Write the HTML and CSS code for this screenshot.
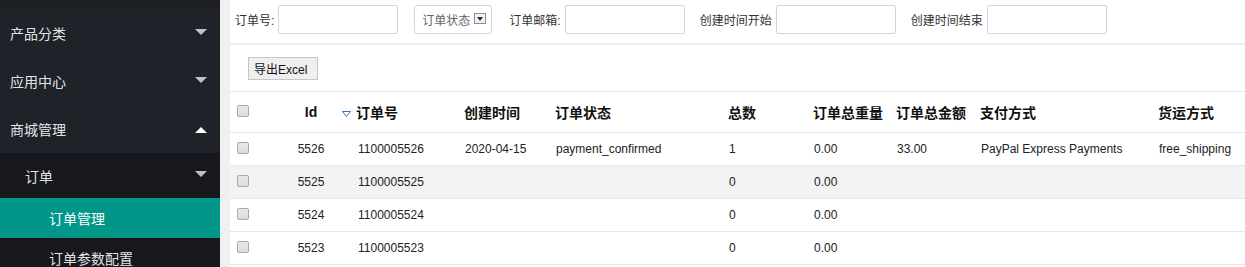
FILE: index.html
```html
<!DOCTYPE html>
<html lang="zh-CN">
<head>
  <meta charset="UTF-8" />
  <meta name="viewport" content="width=device-width, initial-scale=1.0"/>
  <title>订单管理</title>
  <link rel="stylesheet" href="styles.css">
</head>
<body>
  <div class="layout">
    <aside class="side">
      <div class="side-top"></div>
      <ul class="nav">
        <li class="nav-item"><a>产品分类<span class="more"></span></a></li>
        <li class="nav-item"><a>应用中心<span class="more"></span></a></li>
        <li class="nav-item open">
          <a>商城管理<span class="more up"></span></a>
          <ul class="nav-child">
            <li class="child-head"><a>订单<span class="more"></span></a></li>
            <li class="child-link active"><a>订单管理</a></li>
            <li class="child-link"><a>订单参数配置</a></li>
          </ul>
        </li>
      </ul>
    </aside>

    <main class="main">
      <form class="filter">
        <label class="field first">订单号:<input type="text" /></label>
        <div class="select">订单状态<span class="select-btn"><svg width="6" height="4" viewBox="0 0 6 4"><polygon points="0,0 6,0 3,4" fill="#1e2a3a"/></svg></span></div>
        <label class="field">订单邮箱:<input type="text" /></label>
        <label class="field">创建时间开始<input type="text" /></label>
        <label class="field">创建时间结束<input type="text" /></label>
      </form>

      <div class="toolbar">
        <button type="button" class="btn">导出Excel</button>
      </div>

      <table class="grid">
        <colgroup>
          <col style="width:50px">
          <col style="width:62px">
          <col style="width:122px">
          <col style="width:91px">
          <col style="width:173px">
          <col style="width:85px">
          <col style="width:83px">
          <col style="width:84px">
          <col style="width:178px">
          <col style="width:87px">
        </colgroup>
        <thead>
          <tr>
            <th class="chk"><input type="checkbox" /></th>
            <th class="center">Id</th>
            <th><svg class="sort" width="9" height="6" viewBox="0 0 9 6"><polygon points="0.5,0.5 8.5,0.5 4.5,5.5" fill="none" stroke="#3d6db5" stroke-width="1"/></svg>订单号</th>
            <th>创建时间</th>
            <th>订单状态</th>
            <th>总数</th>
            <th>订单总重量</th>
            <th>订单总金额</th>
            <th>支付方式</th>
            <th>货运方式</th>
          </tr>
        </thead>
        <tbody>
          <tr>
            <td class="chk"><input type="checkbox" /></td>
            <td class="center">5526</td>
            <td class="sn">1100005526</td>
            <td>2020-04-15</td>
            <td>payment_confirmed</td>
            <td>1</td>
            <td>0.00</td>
            <td>33.00</td>
            <td>PayPal Express Payments</td>
            <td>free_shipping</td>
          </tr>
          <tr class="hover">
            <td class="chk"><input type="checkbox" /></td>
            <td class="center">5525</td>
            <td class="sn">1100005525</td>
            <td></td>
            <td></td>
            <td>0</td>
            <td>0.00</td>
            <td></td>
            <td></td>
            <td></td>
          </tr>
          <tr>
            <td class="chk"><input type="checkbox" /></td>
            <td class="center">5524</td>
            <td class="sn">1100005524</td>
            <td></td>
            <td></td>
            <td>0</td>
            <td>0.00</td>
            <td></td>
            <td></td>
            <td></td>
          </tr>
          <tr>
            <td class="chk"><input type="checkbox" /></td>
            <td class="center">5523</td>
            <td class="sn">1100005523</td>
            <td></td>
            <td></td>
            <td>0</td>
            <td>0.00</td>
            <td></td>
            <td></td>
            <td></td>
          </tr>
        </tbody>
      </table>
    </main>
  </div>
</body>
</html>
```

FILE: styles.css
```css
html, body {
  margin: 0;
  height: 100%;
  overflow: hidden;
}

body {
  font-family: "Liberation Sans", "Noto Sans CJK SC", sans-serif;
  font-size: 12px;
  color: #222;
  background: #f0f0f0;
}

ul {
  list-style: none;
  margin: 0;
  padding: 0;
}

.layout {
  display: flex;
  gap: 10px;
  height: 100vh;
}

/* sidebar */
.side {
  width: 220px;
  flex-shrink: 0;
  background: #20222a;
  color: rgba(255, 255, 255, 0.9);
  font-size: 14px;
}

.side-top {
  height: 9px;
  background: #1d1f25;
}

.nav a {
  display: flex;
  align-items: center;
  justify-content: space-between;
  height: 48px;
  padding: 0 13px 0 10px;
  cursor: pointer;
}

.more {
  width: 0;
  height: 0;
  border-left: 6px solid transparent;
  border-right: 6px solid transparent;
  border-top: 6px solid #c2c2c2;
  margin-top: -3px;
}

.more.up {
  border-top: none;
  border-bottom: 6px solid #fff;
  margin-top: 2px;
}

.nav-child {
  background: #17181d;
}

.child-head a {
  height: 45px;
  padding-left: 25px;
}

.child-link a {
  height: 40px;
  padding-left: 49px;
}

.child-link.active a {
  background: #009688;
  color: #fff;
}

/* main area */
.main {
  flex: 1;
  background: #fff;
  min-width: 0;
}

.filter {
  display: flex;
  align-items: center;
  padding: 5px 0 9px 5px;
  border-bottom: 2px solid #eee;
  color: #333;
}

.field {
  display: flex;
  align-items: center;
  gap: 4px;
  margin-right: 15px;
}

.field.first {
  margin-right: 16px;
}

.field input {
  width: 120px;
  height: 29px;
  box-sizing: border-box;
  border: 1px solid #d2d6de;
  border-radius: 2px;
  padding: 0 6px;
  font-size: 12px;
}

.select {
  display: flex;
  align-items: center;
  gap: 4px;
  width: 78px;
  height: 29px;
  box-sizing: border-box;
  border: 1px solid #d2d6de;
  border-radius: 3px;
  padding-left: 7px;
  margin-right: 17px;
  color: #666;
}

.select-btn {
  display: flex;
  align-items: center;
  justify-content: center;
  width: 10px;
  height: 9px;
  border: 1px solid #8a8f99;
  background: #f4f4f4;
  margin-top: -2px;
}

.toolbar {
  padding: 12px 0 11px 18px;
}

.btn {
  height: 23px;
  width: 70px;
  padding: 0 0 0 5px;
  text-align: left;
  font: inherit;
  font-size: 12px;
  color: #111;
  background: #efefef;
  border: 1px solid #c6c6c6;
  border-radius: 0;
}

/* table */
.grid {
  width: 100%;
  table-layout: fixed;
  border-collapse: collapse;
  border-top: 1px solid #e6e6e6;
}

.grid th {
  height: 40px;
  padding: 0;
  text-align: left;
  font-size: 14px;
  font-weight: bold;
  color: #111;
  white-space: nowrap;
  border-bottom: 1px solid #e6e6e6;
}

.grid td {
  height: 32px;
  padding: 0 0 0 1px;
  color: #222;
  white-space: nowrap;
  border-bottom: 1px solid #e6e6e6;
}

.grid .center {
  text-align: center;
  padding-left: 0;
}

.grid td.sn {
  padding-left: 16px;
}

.grid .chk {
  padding-left: 7px;
}

.grid tr.hover td {
  background: #f3f3f3;
}

.sort {
  margin-right: 5px;
  vertical-align: 1px;
}

.grid input[type="checkbox"] {
  appearance: none;
  -webkit-appearance: none;
  display: block;
  width: 12px;
  height: 12px;
  margin: 0 0 3px;
  border: 1px solid #a9a9a9;
  border-radius: 2px;
  background: linear-gradient(#e9e9e9, #dcdcdc);
  box-sizing: border-box;
}
```
